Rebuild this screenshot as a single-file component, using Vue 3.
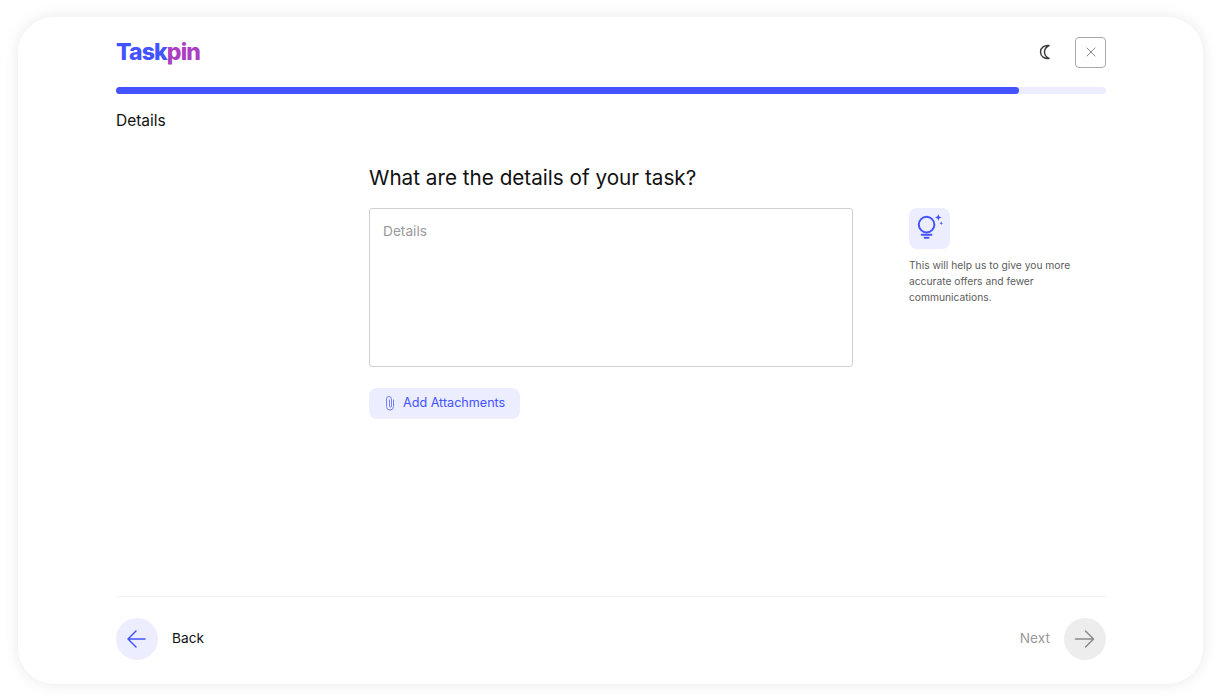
<script setup>
const hint = 'This will help us to give you more accurate offers and fewer communications.'
</script>

<template>
  <div class="page">
    <main class="card">
      <div class="inner">
        <header class="top">
          <div class="logo">Task<span class="pin">pin</span></div>
          <div class="top-actions">
            <svg class="moon" width="14" height="16" viewBox="0 0 14 16" fill="none" stroke="#3a3a3a" stroke-width="1.400" stroke-linejoin="round">
              <path d="M11 1.500C6.500 1 2.500 3.600 2.500 8c0 4.400 4 7 8.500 6.500C8 13 6.500 10.800 6.500 8S8 3 11 1.500z" />
            </svg>
            <button class="close" aria-label="Close">
              <svg width="10" height="10" viewBox="0 0 10 10" stroke="#888" stroke-width="1" fill="none"><path d="M.7.7l8.600 8.600M9.300.7L.7 9.300" /></svg>
            </button>
          </div>
        </header>
        <div class="track"><div class="bar" :style="{ width: '91.2%' }"></div></div>
        <div class="step">Details</div>

        <section class="body">
          <div class="form">
            <h1>What are the details of your task?</h1>
            <div class="area">Details</div>
            <button class="attach">
              <svg width="10" height="16" viewBox="0 0 10 16" fill="none" stroke="#4353ff" stroke-width="1" opacity=".7" stroke-linecap="round">
                <path d="M8.500 5v6.500a3.500 3.500 0 0 1-7 0V4a2.500 2.500 0 0 1 5 0v7a1 1 0 0 1-2 0V5" />
              </svg>
              <span>Add Attachments</span>
            </button>
          </div>
          <aside class="hint">
            <div class="bulb">
              <svg width="41" height="41" viewBox="0 0 42 42" fill="none" stroke="#4353ff" stroke-width="2" stroke-linecap="round">
                <circle cx="18" cy="17" r="8" />
                <path d="M13 27.500h10M16 30.500h4" />
                <path d="M30 6c.4 2.500 1 3.200 3.500 3.800-2.500.5-3.100 1.200-3.500 3.700-.4-2.500-1-3.200-3.500-3.700C29 9.200 29.600 8.500 30 6z" fill="#4353ff" stroke="none" />
                <path d="M33 13.500c.2 1.400.6 1.800 2 2.100-1.400.3-1.800.7-2 2.100-.2-1.400-.6-1.800-2-2.100 1.400-.3 1.800-.7 2-2.100z" fill="#4353ff" stroke="none" />
              </svg>
            </div>
            <p>{{ hint }}</p>
          </aside>
        </section>

        <footer class="foot">
          <div class="nav">
            <button class="circle back" aria-label="Back">
              <svg width="22" height="22" viewBox="0 0 22 22" fill="none" stroke="#4353ff" stroke-width="1.500" stroke-linecap="round" stroke-linejoin="round"><path d="M19 11H2M10 3 2 11l8 8" /></svg>
            </button>
            <span class="back-label">Back</span>
          </div>
          <div class="nav">
            <span class="next-label">Next</span>
            <button class="circle next" aria-label="Next">
              <svg width="22" height="22" viewBox="0 0 22 22" fill="none" stroke="#8a8a8a" stroke-width="1.500" stroke-linecap="round" stroke-linejoin="round"><path d="M1.500 11h18M11.500 3l8 8-8 8" /></svg>
            </button>
          </div>
        </footer>
      </div>
    </main>
  </div>
</template>

<style>
html, body { margin: 0; background: #fff; }
</style>

<style scoped>
* { box-sizing: border-box; }
.page {
  width: 1219px;
  height: 700px;
  padding: 17px 16px 16px 18px;
  font-family: Inter, "Liberation Sans", sans-serif;
  color: #111;
  background: #fff;
  overflow: hidden;
}
.card {
  height: 667px;
  background: #fff;
  border-radius: 36px;
  box-shadow: 0 0 16px rgba(0, 0, 0, 0.09);
  padding: 20px 97px 24px 98px;
}
.inner { height: 100%; display: flex; flex-direction: column; }
.top { height: 30px; display: flex; align-items: center; justify-content: space-between; }
.logo {
  font-size: 23px;
  font-weight: 800;
  letter-spacing: -0.85px;
  color: #4353ff;
  line-height: 30px;
  margin-top: -1px;
}
.pin { color: #ab3fc4; }
.top-actions { display: flex; align-items: center; gap: 23px; }
.moon { display: block; }
.close {
  width: 31px;
  height: 31px;
  padding: 0;
  border: 1px solid #a8a8a8;
  border-radius: 4px;
  background: #fff;
  display: flex;
  align-items: center;
  justify-content: center;
}
.track { height: 7px; margin-top: 20px; border-radius: 4px; background: #ecedff; }
.bar { height: 100%; border-radius: 4px; background: #4353ff; }
.step { margin-top: 17px; font-size: 15.500px; line-height: 20px; }
.body { flex: 1; display: flex; padding: 33px 0 0 253px; }
.form { width: 484px; }
h1 { margin: 0; font-size: 20.700px; line-height: 28px; font-weight: 400; color: #111; }
.area {
  height: 159px;
  margin-top: 16px;
  padding: 13px 13px;
  border: 1px solid #d0d0d0;
  border-radius: 3px;
  font-size: 13.700px;
  line-height: 18px;
  color: #9a9a9a;
}
.attach {
  margin-top: 21px;
  width: 151px;
  height: 31px;
  padding: 0 0 2px 16px;
  display: flex;
  align-items: center;
  gap: 8px;
  border: 0;
  border-radius: 8px;
  background: #ecedff;
  color: #4353ff;
  font: 400 12.600px Inter, "Liberation Sans", sans-serif;
}
.hint { margin-left: 56px; width: 170px; }
.bulb {
  width: 41px;
  height: 41px;
  margin-top: 44px;
  border-radius: 8px;
  background: #ecedff;
}
.bulb svg { display: block; }
.hint p { margin: 8px 0 0; font-size: 10.250px; line-height: 16px; color: #5c5c5c; }
.foot {
  height: 64px;
  padding-top: 21px;
  border-top: 1px solid #f1f1f1;
  display: flex;
  align-items: flex-start;
  justify-content: space-between;
}
.nav { display: flex; align-items: center; }
.circle {
  width: 42px;
  height: 42px;
  padding: 0;
  border: 0;
  border-radius: 50%;
  display: flex;
  align-items: center;
  justify-content: center;
}
.back { background: #ecedff; }
.next { background: #ededed; }
.back-label { margin: -2px 0 0 14px; font-size: 13.700px; color: #111; }
.next-label { margin: -2px 14px 0 0; font-size: 13.700px; color: #9a9a9a; }
</style>
